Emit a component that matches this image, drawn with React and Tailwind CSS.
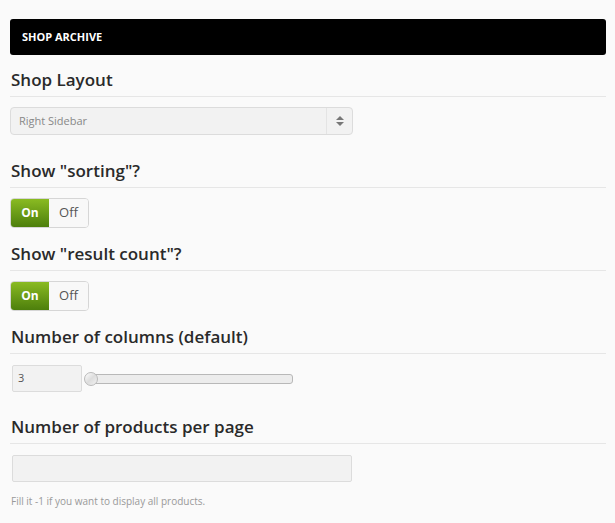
import React from 'react';

const font = { fontFamily: '"Open Sans", "Noto Sans", sans-serif' };

const Heading = ({ children }) => (
  <h3 className="text-[17px] leading-[24px] font-semibold text-[#2a2a2a] pb-[4px] border-b border-[#e6e6e6] pl-[1px]">
    {children}
  </h3>
);

const Toggle = () => (
  <div className="flex w-[79px] h-[30px] rounded-[4px] border border-[#d6d6d6] overflow-hidden">
    <div className="w-[38px] flex items-center justify-center bg-gradient-to-b from-[#8abb22] to-[#4d7f0c] text-white text-[12px] font-bold">
      On
    </div>
    <div className="flex-1 flex items-center justify-center bg-[#f8f8f8] text-[#555] text-[13px]">
      Off
    </div>
  </div>
);

const App = () => {
  return (
    <div className="min-h-[523px] bg-[#fafafa] pl-[10px] pr-[9px] pt-[19px]" style={font}>
      {/* Section bar */}
      <div className="h-[36px] bg-black rounded-[3px] flex items-center pl-[12px]">
        <span className="text-white text-[11px] font-bold">SHOP ARCHIVE</span>
      </div>

      {/* Shop Layout */}
      <div className="mt-[13px]">
        <Heading>Shop Layout</Heading>
        <div className="mt-[10px] w-[343px] h-[28px] bg-[#f2f2f2] border border-[#dcdcdc] rounded-[4px] flex items-center">
          <span className="flex-1 pl-[8px] text-[11px] text-[#888]">Right Sidebar</span>
          <div className="w-[26px] h-full border-l border-[#e4e4e4] flex flex-col items-center justify-center gap-[1px]">
            <svg width="8" height="10" viewBox="0 0 8 10">
              <path d="M4 0 L8 4 L0 4 Z" fill="#777" />
              <path d="M4 10 L8 6 L0 6 Z" fill="#777" />
            </svg>
          </div>
        </div>
      </div>

      {/* Show sorting */}
      <div className="mt-[24px]">
        <Heading>Show "sorting"?</Heading>
        <div className="mt-[10px]">
          <Toggle />
        </div>
      </div>

      {/* Show result count */}
      <div className="mt-[14px]">
        <Heading>Show "result count"?</Heading>
        <div className="mt-[10px]">
          <Toggle />
        </div>
      </div>

      {/* Columns */}
      <div className="mt-[14px]">
        <Heading>Number of columns (default)</Heading>
        <div className="mt-[11px] flex items-center pl-[2px]">
          <div className="w-[70px] h-[27px] bg-[#f2f2f2] border border-[#dcdcdc] rounded-[2px] flex items-center pl-[5px] text-[11px] text-[#555]">
            3
          </div>
          <div className="relative ml-[3px] w-[208px] h-[10px] bg-[#ececec] border border-[#b8b8b8] rounded-[3px]">
            <div className="absolute left-[-2px] top-1/2 -translate-y-1/2 w-[14px] h-[14px] rounded-full border border-[#bbb] bg-gradient-to-br from-[#fff] via-[#ddd] to-[#f2f2f2]" />
          </div>
        </div>
      </div>

      {/* Products per page */}
      <div className="mt-[23px]">
        <Heading>Number of products per page</Heading>
        <div className="mt-[11px] ml-[2px] w-[340px] h-[27px] bg-[#f2f2f2] border border-[#dcdcdc] rounded-[2px]" />
        <p className="mt-[12px] ml-[1px] text-[10px] text-[#999]">Fill it -1 if you want to display all products.</p>
      </div>
    </div>
  );
};

export default App;
